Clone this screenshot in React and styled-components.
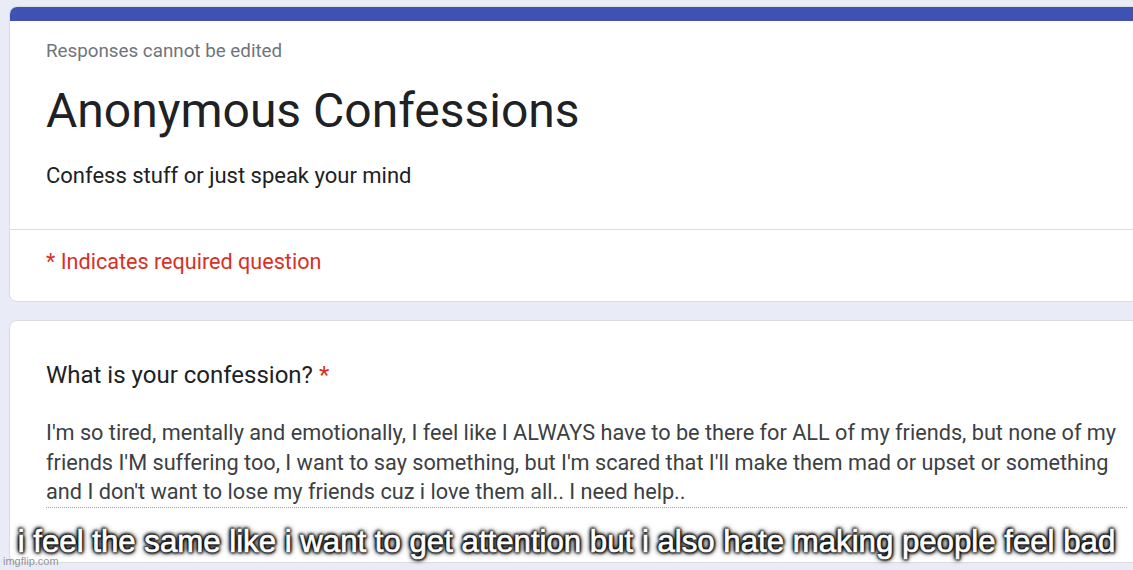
import React from "react";
import styled, { createGlobalStyle } from "styled-components";

const Global = createGlobalStyle`
  html, body { margin: 0; padding: 0; }
  body {
    background: #e9ebf6;
    font-family: Roboto, "Liberation Sans", sans-serif;
    overflow: hidden;
    width: 1133px;
    height: 570px;
  }
`;

const Page = styled.div`
  position: relative;
  width: 1133px;
  height: 570px;
  overflow: hidden;
  box-sizing: border-box;
  padding: 6px 0 0 9px;
  display: flex;
  flex-direction: column;
  gap: 18px;
`;

const Card = styled.section`
  width: 1140px;
  background: #fff;
  border: 1px solid #dadce0;
  border-radius: 8px;
  box-sizing: border-box;
  overflow: hidden;
  height: ${(p) => p.$h}px;
  flex-shrink: 0;
`;

const TopBar = styled.div`
  height: 15px;
  background: #3f51b5;
  margin: -1px -1px 0 -1px;
`;

const Header = styled.div`
  padding: 19px 0 0 36px;
  height: 209px;
  box-sizing: border-box;
  border-bottom: 1px solid #dadce0;
`;

const Note = styled.div`
  font-size: 18.8px;
  line-height: 22px;
  color: #70757a;
`;

const Title = styled.h1`
  margin: 21px 0 0 0;
  font-size: 48px;
  line-height: 56px;
  font-weight: 400;
  color: #202124;
`;

const Desc = styled.div`
  margin-top: 23px;
  font-size: 22px;
  line-height: 28px;
  color: #202124;
`;

const Required = styled.div`
  padding: 18px 0 0 36px;
  font-size: 21.6px;
  line-height: 28px;
  color: #d93025;
`;

const Body = styled.div`
  padding: 39px 6px 0 36px;
`;

const Question = styled.div`
  font-size: 24px;
  line-height: 30px;
  color: #202124;
  span { color: #d93025; }
`;

const Answer = styled.div`
  margin-top: 28px;
  width: 1081px;
  font-size: 21.7px;
  line-height: 29.5px;
  color: #3c4043;
  white-space: nowrap;
  border-bottom: 1px dotted #9aa0a6;
`;

const Line = styled.div``;

const Caption = styled.div`
  position: absolute;
  left: 0;
  right: 0;
  bottom: 10px;
  text-align: center;
  font-family: "Liberation Sans", Arial, sans-serif;
  font-size: 31.2px;
  line-height: 36px;
  color: #fff;
  white-space: nowrap;
  -webkit-text-stroke: 0.7px #fff;
  text-shadow: 0 0 3px #000, 0 0 3px #000, 0 0 5px #000, 0 0 6px #000, 1px 1px 3px #000, -1px -1px 3px #000;
`;

const Watermark = styled.div`
  position: absolute;
  left: 3px;
  bottom: 3px;
  font-family: "Liberation Sans", Arial, sans-serif;
  font-size: 11px;
  color: rgba(120, 120, 120, 0.8);
`;

const lines = [
  "I'm so tired, mentally and emotionally, I feel like I ALWAYS have to be there for ALL of my friends, but none of my",
  "friends I'M suffering too, I want to say something, but I'm scared that I'll make them mad or upset or something",
  "and I don't want to lose my friends cuz i love them all.. I need help..",
];

export default function App() {
  return (
    <>
      <Global />
      <Page>
        <Card $h={296}>
          <TopBar />
          <Header>
            <Note>Responses cannot be edited</Note>
            <Title>Anonymous Confessions</Title>
            <Desc>Confess stuff or just speak your mind</Desc>
          </Header>
          <Required>* Indicates required question</Required>
        </Card>
        <Card $h={243}>
          <Body>
            <Question>
              What is your confession? <span>*</span>
            </Question>
            <Answer>
              {lines.map((l) => (
                <Line key={l}>{l}</Line>
              ))}
            </Answer>
          </Body>
        </Card>
        <Caption>i feel the same like i want to get attention but i also hate making people feel bad</Caption>
        <Watermark>imgflip.com</Watermark>
      </Page>
    </>
  );
}
